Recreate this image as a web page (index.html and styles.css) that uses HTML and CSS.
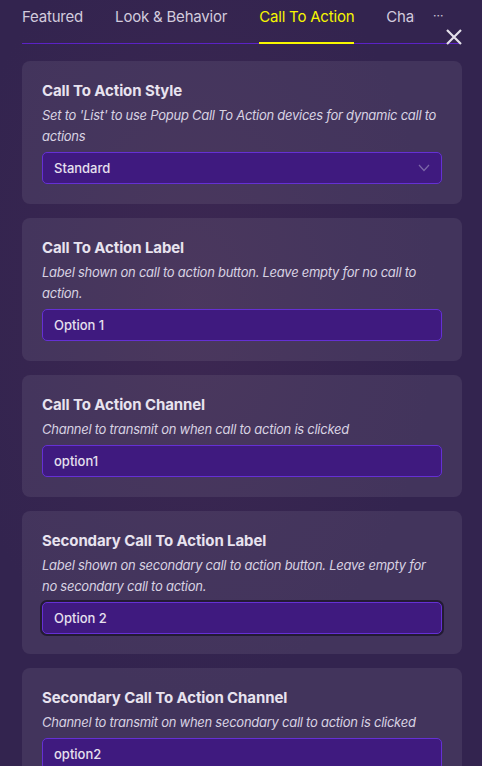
FILE: index.html
```html
<!DOCTYPE html>
<html>
<head>
<meta charset="utf-8">
<link rel="stylesheet" href="styles.css">
</head>
<body>
<div class="page">
  <nav class="tabbar">
    <div class="tabs">
      <span class="tab">Featured</span>
      <span class="tab">Look &amp; Behavior</span>
      <span class="tab active">Call To Action</span>
      <span class="tab">Channels</span>
    </div>
    <span class="more">···</span>
  </nav>
  <button class="close" aria-label="Close">
    <svg width="18" height="18" viewBox="0 0 18 18"><path d="M2 2L16 16M16 2L2 16" stroke="#e4e0ea" stroke-width="2.2" stroke-linecap="butt"/></svg>
  </button>

  <main class="cards">
    <section class="card">
      <h3 class="title">Call To Action Style</h3>
      <p class="desc">Set to 'List' to use Popup Call To Action devices for dynamic call to actions</p>
      <div class="field select">
        <span>Standard</span>
        <svg class="chev" width="12" height="8" viewBox="0 0 12 8"><path d="M1 1L6 6.5L11 1" fill="none" stroke="#7c67a8" stroke-width="1.2"/></svg>
      </div>
    </section>

    <section class="card">
      <h3 class="title">Call To Action Label</h3>
      <p class="desc">Label shown on call to action button. Leave empty for no call to action.</p>
      <div class="field"><span>Option 1</span></div>
    </section>

    <section class="card">
      <h3 class="title">Call To Action Channel</h3>
      <p class="desc">Channel to transmit on when call to action is clicked</p>
      <div class="field"><span>option1</span></div>
    </section>

    <section class="card">
      <h3 class="title">Secondary Call To Action Label</h3>
      <p class="desc">Label shown on secondary call to action button. Leave empty for no secondary call to action.</p>
      <div class="field focused"><span>Option 2</span></div>
    </section>

    <section class="card">
      <h3 class="title">Secondary Call To Action Channel</h3>
      <p class="desc">Channel to transmit on when secondary call to action is clicked</p>
      <div class="field"><span>option2</span></div>
    </section>
  </main>
</div>
</body>
</html>
```

FILE: styles.css
```css
* { box-sizing: border-box; }
html, body {
  margin: 0;
  padding: 0;
  height: 100%;
  overflow: hidden;
}
body {
  background: #33244f;
  font-family: Inter, "Noto Sans", sans-serif;
  color: #e6e1ee;
}
.page {
  position: relative;
  width: 482px;
  height: 766px;
  overflow: hidden;
  background:
    radial-gradient(ellipse at 40% 40%, rgba(90, 50, 90, 0.25), transparent 60%),
    #33244f;
}
.tabbar {
  display: flex;
  align-items: flex-start;
  margin: 0 22px;
  height: 44px;
  border-bottom: 1px solid #5b22c6;
}
.tabs {
  display: flex;
  gap: 32px;
  width: 393px;
  overflow: hidden;
  white-space: nowrap;
  flex-shrink: 0;
}
.tab {
  font-size: 15px;
  line-height: 20px;
  padding-top: 7px;
  height: 44px;
  color: #d2cbdd;
  letter-spacing: -0.2px;
  flex-shrink: 0;
}
.tab.active {
  color: #f7f700;
  border-bottom: 2px solid #f7f700;
  height: 44px;
  margin-bottom: -1px;
}
.more {
  margin-left: 18px;
  font-size: 12px;
  line-height: 12px;
  padding-top: 10px;
  color: #cfc8da;
}
.close {
  position: absolute;
  top: 28px;
  left: 445px;
  width: 18px;
  height: 18px;
  padding: 0;
  border: 0;
  background: none;
  display: block;
}
.close svg { display: block; }
.cards {
  display: flex;
  flex-direction: column;
  gap: 14px;
  padding: 17px 20px 0 22px;
}
.card {
  background: rgba(255, 255, 255, 0.075);
  border-radius: 8px;
  padding: 20px;
}
.title {
  margin: 0 0 4px;
  font-size: 15px;
  line-height: 20px;
  font-weight: 700;
  color: #e8e3ef;
  letter-spacing: -0.1px;
}
.desc {
  margin: 0 0 5px;
  font-size: 13px;
  line-height: 21px;
  font-style: italic;
  letter-spacing: -0.26px;
  color: #d8d2e2;
}
.field {
  display: flex;
  align-items: center;
  justify-content: space-between;
  height: 32px;
  padding: 0 11px;
  background: #3f1a7f;
  border: 1px solid #6530d4;
  border-radius: 5px;
  font-size: 13px;
  font-weight: 500;
  color: #e6e0ee;
}
.field.focused {
  box-shadow: 0 0 0 2px #231b33;
}
```
